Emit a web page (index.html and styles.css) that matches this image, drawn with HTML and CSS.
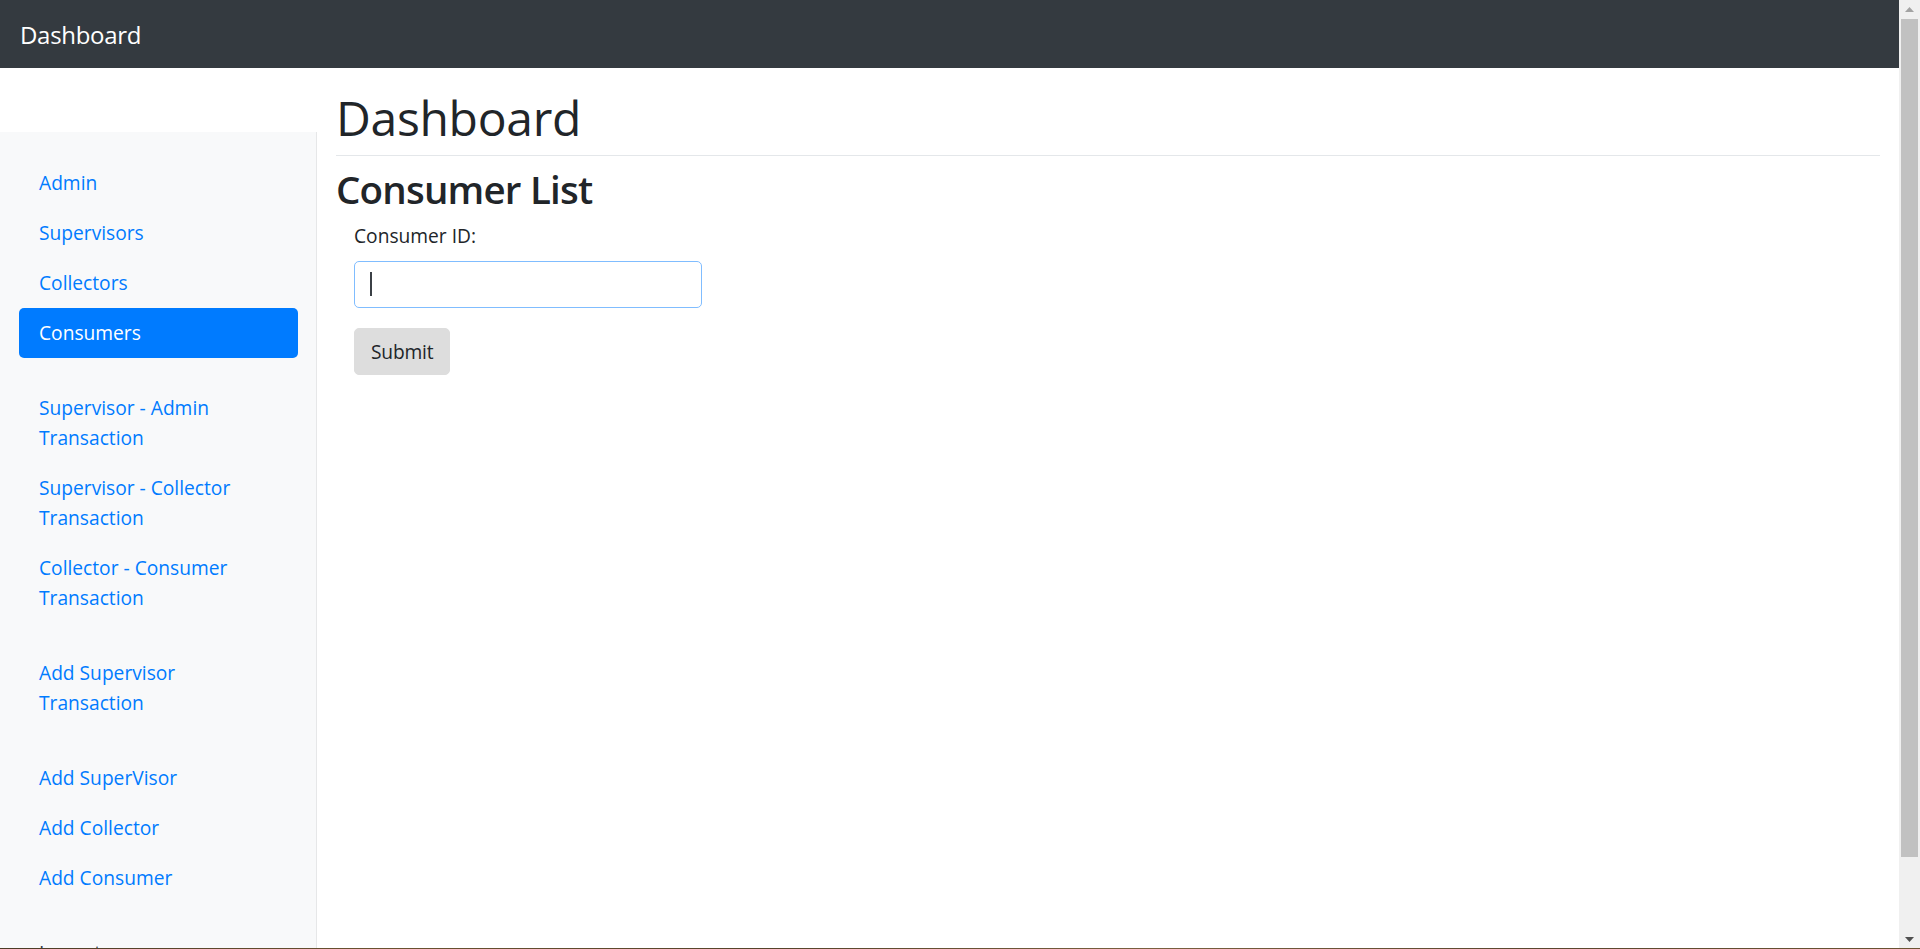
FILE: index.html
```html
<!DOCTYPE html>
<html lang="en">
<head>
<meta charset="utf-8">
<title>Dashboard</title>
<link rel="stylesheet" href="styles.css">
</head>
<body>
<div class="app">
  <div class="page">
    <header class="navbar">
      <a class="brand" href="#">Dashboard</a>
    </header>
    <div class="layout">
      <nav class="sidebar">
        <ul class="nav-group">
          <li><a class="nav-link" href="#">Admin</a></li>
          <li><a class="nav-link" href="#">Supervisors</a></li>
          <li><a class="nav-link" href="#">Collectors</a></li>
          <li><a class="nav-link active" href="#">Consumers</a></li>
        </ul>
        <ul class="nav-group">
          <li><a class="nav-link" href="#">Supervisor - Admin Transaction</a></li>
          <li><a class="nav-link" href="#">Supervisor - Collector Transaction</a></li>
          <li><a class="nav-link" href="#">Collector - Consumer Transaction</a></li>
        </ul>
        <ul class="nav-group">
          <li><a class="nav-link" href="#">Add Supervisor Transaction</a></li>
        </ul>
        <ul class="nav-group">
          <li><a class="nav-link" href="#">Add SuperVisor</a></li>
          <li><a class="nav-link" href="#">Add Collector</a></li>
          <li><a class="nav-link" href="#">Add Consumer</a></li>
        </ul>
        <ul class="nav-group">
          <li><a class="nav-link logout" href="#">Logout</a></li>
        </ul>
      </nav>
      <main class="main">
        <div class="page-head">
          <h1 class="title">Dashboard</h1>
        </div>
        <h2 class="subtitle">Consumer List</h2>
        <div class="container">
          <form class="form">
            <div class="form-group">
              <label class="label" for="cid">Consumer ID:</label>
              <div class="input-wrap">
                <input class="input" id="cid" type="text">
                <span class="caret"></span>
              </div>
            </div>
            <button class="btn" type="button">Submit</button>
          </form>
        </div>
      </main>
    </div>
  </div>
  <div class="scrollbar">
    <div class="sb-btn">
      <svg width="9" height="5" viewBox="0 0 9 5"><path d="M0 5 L4.5 0 L9 5 Z" fill="#a3a3a3"/></svg>
    </div>
    <div class="sb-track">
      <div class="sb-thumb"></div>
    </div>
    <div class="sb-btn">
      <svg width="9" height="5" viewBox="0 0 9 5"><path d="M0 0 L9 0 L4.5 5 Z" fill="#505050"/></svg>
    </div>
  </div>
</div>
<div class="desktop-edge"></div>
</body>
</html>
```

FILE: styles.css
```css
* { box-sizing: border-box; }

html, body {
  margin: 0;
  padding: 0;
  overflow: hidden;
  height: 100%;
}

body {
  font-family: "Open Sans", "Noto Sans", "Liberation Sans", sans-serif;
  color: #212529;
  background: #fff;
}

.app {
  display: flex;
  height: 100vh;
}

.page {
  flex: 1;
  min-width: 0;
  overflow: hidden;
}

/* Navbar */
.navbar {
  height: 68px;
  background: #343a40;
  display: flex;
  align-items: center;
  padding: 0 20px;
}

.brand {
  color: #fff;
  font-size: 24px;
  line-height: 37px;
  text-decoration: none;
  letter-spacing: -0.3px;
}

/* Layout */
.layout {
  display: flex;
  align-items: flex-start;
}

.sidebar {
  width: 317px;
  flex: none;
  margin-top: 64px;
  padding: 26px 19px 60px 19px;
  background: #f8f9fa;
  box-shadow: inset -1px 0 0 rgba(0, 0, 0, 0.07);
  min-height: 960px;
}

.nav-group {
  list-style: none;
  margin: 25px 0 0 0;
  padding: 0;
}

.nav-group:first-child { margin-top: 0; }

.nav-link {
  display: block;
  padding: 10px 20px;
  font-size: 19.2px;
  line-height: 30px;
  color: #007bff;
  text-decoration: none;
  border-radius: 5px;
}

.nav-link.active {
  background: #007bff;
  color: #fff;
}

.nav-link.logout {
  color: #343a40;
}

/* Main */
.main {
  flex: 1;
  min-width: 0;
  padding: 20px 19px 0 19px;
}

.page-head {
  padding-bottom: 7px;
  border-bottom: 1px solid #e4e7ea;
}

.title {
  margin: 0;
  font-size: 48px;
  line-height: 60px;
  font-weight: 400;
  color: #212529;
  letter-spacing: -0.3px;
}

.subtitle {
  margin: 9px 0 0 0;
  font-size: 38.5px;
  line-height: 48px;
  font-weight: 600;
  color: #212529;
  letter-spacing: -0.8px;
}

.container {
  padding: 0 18px;
}

.form {
  margin-top: 8px;
}

.form-group {
  margin-bottom: 20px;
}

.label {
  display: inline-block;
  font-size: 19.2px;
  line-height: 30px;
  margin-bottom: 10px;
  color: #212529;
}

.input-wrap {
  position: relative;
  width: 348px;
}

.input {
  display: block;
  width: 348px;
  height: 47px;
  border: 1px solid #80bdff;
  border-radius: 5px;
  padding: 7px 15px;
  font-family: inherit;
  font-size: 20px;
  color: #495057;
  outline: none;
  background: #fff;
  caret-color: transparent;
}

.caret {
  position: absolute;
  left: 16px;
  top: 11px;
  width: 2px;
  height: 24px;
  background: #3b4046;
}

.btn {
  display: inline-block;
  height: 47px;
  padding: 0 16px;
  border: 1px solid #dddddd;
  border-radius: 5px;
  background: #dddddd;
  font-family: inherit;
  font-size: 19.2px;
  line-height: 30px;
  color: #212529;
  cursor: pointer;
  letter-spacing: -0.2px;
}

/* Fake scrollbar */
.scrollbar {
  width: 21px;
  flex: none;
  height: 100vh;
  background: #f0f0f0;
  display: flex;
  flex-direction: column;
}

.sb-btn {
  height: 19px;
  flex: none;
  display: flex;
  align-items: center;
  justify-content: center;
}

.sb-btn svg { display: block; }

.sb-track {
  flex: 1;
  padding: 0 2px;
}

.sb-thumb {
  height: 838px;
  background: #c1c1c1;
}

.desktop-edge {
  position: fixed;
  left: 0;
  right: 0;
  bottom: 0;
  height: 1px;
  background: linear-gradient(90deg, #4b3b26 0%, #6a5232 20%, #55432b 40%, #7a6040 60%, #5a4630 80%, #6b5434 100%);
}
```
